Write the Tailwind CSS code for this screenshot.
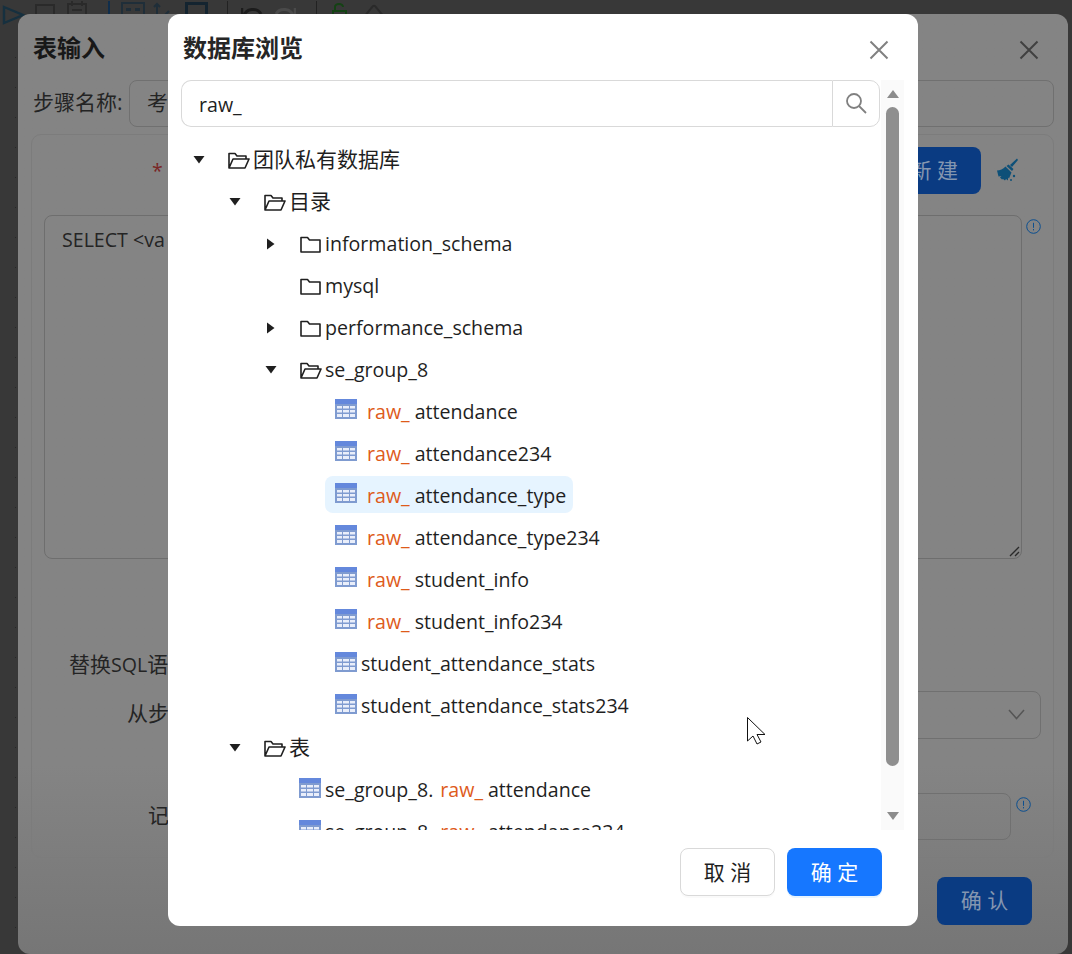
<!DOCTYPE html>
<html lang="zh">
<head>
<meta charset="utf-8">
<script src="https://cdn.jsdelivr.net/npm/@tailwindcss/browser@4"></script>
</head>
<body class="overflow-hidden">
<div class="relative w-[1072px] h-[954px] overflow-hidden bg-[#383838] text-[19.6px] leading-[28px] text-[#1f1f1f] font-['Open_Sans','Noto_Sans_CJK_SC',sans-serif]">

  <!-- dimmed toolbar -->
  <div class="flex items-start h-[26px] overflow-visible pl-[2px]">
    <svg class="w-[23px] h-[20px] mt-[5px] shrink-0" viewBox="0 0 23 20" fill="none" stroke="#16303f" stroke-width="2.400"><path d="M2 2 L21 10 L2 18 Z"/></svg>
    <div class="ml-[10px] w-[20px] h-[18px] mt-[4px] border-2 border-[#2a2a2a] shrink-0"></div>
    <svg class="ml-[12px] w-[20px] h-[20px] mt-[1px] shrink-0" viewBox="0 0 20 20" fill="none" stroke="#2a2a2a" stroke-width="2"><rect x="1" y="3" width="18" height="16"/><path d="M5 0v5M15 0v5M5 9h10"/></svg>
    <div class="ml-[21px] w-[2px] h-[14px] mt-[1px] bg-[#102e4c] shrink-0"></div>
    <div class="ml-[11px] w-[24px] h-[14px] mt-[2px] border-2 border-[#1f2e39] shrink-0 flex items-center justify-center"><div class="w-[14px] h-[3px] border-x-[5px] border-[#1f2e39]"></div></div>
    <svg class="ml-[7px] w-[18px] h-[14px] mt-[2px] shrink-0" viewBox="0 0 18 14" fill="none" stroke="#1f2e39" stroke-width="2"><path d="M5 14V2M2 5l3-3 3 3M12 14l5-5"/></svg>
    <div class="ml-[15px] w-[23px] h-[18px] mt-[2px] border-[3px] border-[#142430] shrink-0"></div>
    <div class="ml-[19px] w-[1px] h-[14px] mt-[1px] bg-[#222] shrink-0"></div>
    <svg class="ml-[13px] w-[22px] h-[14px] mt-[4px] shrink-0" viewBox="0 0 22 14" fill="none" stroke="#1c1c1c" stroke-width="3"><path d="M3 12a9 8 0 0 1 17-2"/><path d="M1 4v8h7" stroke-width="2.500"/></svg>
    <svg class="ml-[11px] w-[22px] h-[14px] mt-[4px] shrink-0" viewBox="0 0 22 14" fill="none" stroke="#4a4a4a" stroke-width="3"><path d="M19 12a9 8 0 0 0-17-2"/><path d="M21 4v8h-7" stroke-width="2.500"/></svg>
    <div class="ml-[20px] w-[1px] h-[14px] mt-[1px] bg-[#222] shrink-0"></div>
    <svg class="ml-[14px] w-[17px] h-[14px] mt-[3px] shrink-0" viewBox="0 0 17 14" fill="none" stroke="#144214" stroke-width="2"><path d="M2 14V8h13v6M4 8V4a4 3 0 0 1 8 0"/></svg>
    <svg class="ml-[13px] w-[25px] h-[14px] mt-[3px] shrink-0" viewBox="0 0 25 14" fill="none" stroke="#2a2a2a" stroke-width="2"><path d="M3 14 12 3a2 2 0 0 1 2 0l9 11"/></svg>
  </div>
  <div class="absolute left-[15px] top-[57px] w-[1px] h-[897px] bg-[linear-gradient(#262626_0_1px,transparent_1px)] bg-[length:1px_30px]"></div>

  <!-- underlying dimmed dialog -->
  <div class="absolute left-[18px] top-[14px] w-[1050px] h-[940px] rounded-[12px] bg-gradient-to-b from-[#848484] from-80% to-[#767676] pl-[13px] pr-[14px] text-[#242424]">
    <div class="h-[66px] pt-[20px] pl-[2px] text-[24px] leading-[28px] font-bold text-[#181818]">表输入</div>
    <div class="flex items-center h-[47px]">
      <span class="w-[98px] shrink-0 pl-[2px] -mt-[3px] text-[21px] whitespace-nowrap">步骤名称:</span>
      <div class="flex-1 h-[47px] rounded-[8px] border border-[#707070] pl-[17px] leading-[43px] text-[21px]">考</div>
    </div>
    <div class="relative mt-[7px] h-[724px] rounded-[10px] border border-[#7c7c7c]">
      <span class="absolute left-[120px] top-[22px] text-[#7a2626]">*</span>
      <div class="absolute right-[72px] top-[12px] w-[90px] h-[47px] rounded-[8px] bg-[#0a3b82] text-[#8496b0] text-right pr-[23px] leading-[47px] text-[21px]">新 建</div>
      <svg class="absolute right-[35px] top-[23px] w-[22px] h-[24px]" viewBox="0 0 22 24" fill="#0e5078"><path d="M21 0.500 22 2l-6 7-2-2zM12.500 6.500l5 4.500-1.500 2-5.500-5zM9.500 8.500l6 6-2.500 6-1-1 0 3-2-1.500-1 1.500-2-1.500-1 .5-2-2 1.500-1.500-3 .5L1 12.500c3 0 6-1.500 8.500-4z"/><circle cx="18" cy="18" r="1.200"/><circle cx="15" cy="22" r="1"/></svg>
      <div class="absolute left-[12px] top-[80px] w-[978px] h-[344px] rounded-[8px] border border-[#6e6e6e] pl-[17px] pt-[10px]">SELECT &lt;va
        <svg class="absolute right-[1px] bottom-[1px] w-[12px] h-[12px]" viewBox="0 0 12 12" stroke="#2a2a2a" stroke-width="1.300"><path d="M11 2 2 11M11 7 7 11"/></svg>
      </div>
      <svg class="absolute left-[994px] top-[84px] w-[15px] h-[15px]" viewBox="0 0 15 15" fill="none" stroke="#0c4f90"><circle cx="7.500" cy="7.500" r="6.800"/><path d="M7.500 3.800v5M7.500 10v1.400"/></svg>
      <span class="absolute left-[37px] top-[515px] text-[21px] whitespace-nowrap">替换<span class="text-[19.6px]">SQL</span>语</span>
      <span class="absolute left-[95px] top-[564px] text-[21px]">从步</span>
      <div class="absolute right-[12px] top-[556px] w-[500px] h-[48px] rounded-[8px] border border-[#707070]">
        <svg class="absolute right-[15px] top-[17px] w-[17px] h-[11px]" viewBox="0 0 17 11" fill="none" stroke="#555" stroke-width="1.500"><path d="M1 1l7.500 8.500L16 1"/></svg>
      </div>
      <span class="absolute left-[116px] top-[666px] text-[21px]">记</span>
      <div class="absolute right-[42px] top-[658px] w-[400px] h-[47px] rounded-[8px] border border-[#707070]"></div>
      <svg class="absolute left-[984px] top-[662px] w-[15px] h-[15px]" viewBox="0 0 15 15" fill="none" stroke="#0c4f90"><circle cx="7.500" cy="7.500" r="6.800"/><path d="M7.500 3.800v5M7.500 10v1.400"/></svg>
    </div>
    <div class="flex justify-end mt-[19px] mr-[22px]">
      <div class="w-[95px] h-[48px] rounded-[8px] bg-[#0a3b82] text-[#8496b0] text-center leading-[46px] text-[21px]">确 认</div>
    </div>
    <svg class="absolute right-[29px] top-[26px] w-[20px] h-[20px]" viewBox="0 0 20 20" stroke="#404040" stroke-width="2"><path d="M1.500 1.500l17 17M18.500 1.500l-17 17"/></svg>
  </div>

  <!-- foreground dialog -->
  <div class="absolute left-[168px] top-[14px] w-[750px] h-[912px] rounded-[12px] bg-white flex flex-col pl-[13px] text-[#1f1f1f]">
    <div class="h-[66px] pt-[20px] pl-[2px] text-[24px] leading-[28px] font-bold text-[#262626]">数据库浏览</div>
    <svg class="absolute right-[29px] top-[26px] w-[20px] h-[20px]" viewBox="0 0 20 20" stroke="#808080" stroke-width="2"><path d="M1.500 1.500l17 17M18.500 1.500l-17 17"/></svg>

    <div class="flex h-[750px] shrink-0">
      <div class="w-[699px] flex flex-col">
        <div class="flex h-[47px] shrink-0">
          <div class="flex-1 rounded-l-[10px] border border-r-0 border-[#d9d9d9] pl-[17px] leading-[48px]">raw_</div>
          <div class="w-[48px] rounded-r-[10px] border border-[#d9d9d9] flex items-center justify-center">
            <svg class="w-[22px] h-[22px] -mt-[1px]" viewBox="0 0 22 22" fill="none" stroke="#808080" stroke-width="1.800"><circle cx="9" cy="9" r="7"/><path d="M14 14l7 7"/></svg>
          </div>
        </div>
        <div class="mt-[12px] h-[691px] overflow-hidden">
          <div class="flex items-center h-[42px] pl-[11px]"><svg class="w-[14px] h-[8px] shrink-0" viewBox="0 0 14 8" fill="#1f1f1f"><path d="M1.500 0h11L7 7.500z"/></svg><svg class="ml-[22px] w-[22px] h-[17px] shrink-0" viewBox="0 0 22 17" fill="none" stroke="#1f1f1f" stroke-width="1.600"><path d="M1 16V1.500h6l2 2.500h9v3M1 16h16l4-9H5z" stroke-linejoin="round"/></svg><span class="ml-[3px] -mt-[3px] text-[21px]">团队私有数据库</span></div>
          <div class="flex items-center h-[42px] pl-[47px]"><svg class="w-[14px] h-[8px] shrink-0" viewBox="0 0 14 8" fill="#1f1f1f"><path d="M1.500 0h11L7 7.500z"/></svg><svg class="ml-[22px] w-[22px] h-[17px] shrink-0" viewBox="0 0 22 17" fill="none" stroke="#1f1f1f" stroke-width="1.600"><path d="M1 16V1.500h6l2 2.500h9v3M1 16h16l4-9H5z" stroke-linejoin="round"/></svg><span class="ml-[3px] -mt-[3px] text-[21px]">目录</span></div>
          <div class="flex items-center h-[42px] pl-[86px]"><svg class="w-[8px] h-[14px] shrink-0" viewBox="0 0 8 14" fill="#1f1f1f"><path d="M0 1.500v11L7.500 7z"/></svg><svg class="ml-[25px] w-[21px] h-[17px] shrink-0" viewBox="0 0 21 17" fill="none" stroke="#1f1f1f" stroke-width="1.600"><path d="M1 16V1.500h6.500l2 2.500H20v12z" stroke-linejoin="round"/></svg><span class="ml-[4px]">information_schema</span></div>
          <div class="flex items-center h-[42px] pl-[119px]"><svg class="w-[21px] h-[17px] shrink-0" viewBox="0 0 21 17" fill="none" stroke="#1f1f1f" stroke-width="1.600"><path d="M1 16V1.500h6.500l2 2.500H20v12z" stroke-linejoin="round"/></svg><span class="ml-[4px]">mysql</span></div>
          <div class="flex items-center h-[42px] pl-[86px]"><svg class="w-[8px] h-[14px] shrink-0" viewBox="0 0 8 14" fill="#1f1f1f"><path d="M0 1.500v11L7.500 7z"/></svg><svg class="ml-[25px] w-[21px] h-[17px] shrink-0" viewBox="0 0 21 17" fill="none" stroke="#1f1f1f" stroke-width="1.600"><path d="M1 16V1.500h6.500l2 2.500H20v12z" stroke-linejoin="round"/></svg><span class="ml-[4px]">performance_schema</span></div>
          <div class="flex items-center h-[42px] pl-[83px]"><svg class="w-[14px] h-[8px] shrink-0" viewBox="0 0 14 8" fill="#1f1f1f"><path d="M1.500 0h11L7 7.500z"/></svg><svg class="ml-[22px] w-[22px] h-[17px] shrink-0" viewBox="0 0 22 17" fill="none" stroke="#1f1f1f" stroke-width="1.600"><path d="M1 16V1.500h6l2 2.500h9v3M1 16h16l4-9H5z" stroke-linejoin="round"/></svg><span class="ml-[3px]">se_group_8</span></div>

          <div class="flex items-center h-[42px] pl-[154px]"><svg class="w-[22px] h-[20px] shrink-0 -mt-[6px]" viewBox="0 0 22 20"><rect width="22" height="20" fill="#7f9bd0"/><rect width="22" height="5" fill="#6488dc"/><path d="M2 7h5v2.500H2zM8 7h6v2.500H8zM15 7h5v2.500h-5zM2 11h5v2.500H2zM8 11h6v2.500H8zM15 11h5v2.500h-5zM2 15h5v3H2zM8 15h6v3H8zM15 15h5v3h-5z" fill="#e9eefa"/></svg><span class="ml-[10px] text-[#de5b1b]">raw_</span><span class="ml-[5px]">attendance</span></div>
          <div class="flex items-center h-[42px] pl-[154px]"><svg class="w-[22px] h-[20px] shrink-0 -mt-[6px]" viewBox="0 0 22 20"><rect width="22" height="20" fill="#7f9bd0"/><rect width="22" height="5" fill="#6488dc"/><path d="M2 7h5v2.500H2zM8 7h6v2.500H8zM15 7h5v2.500h-5zM2 11h5v2.500H2zM8 11h6v2.500H8zM15 11h5v2.500h-5zM2 15h5v3H2zM8 15h6v3H8zM15 15h5v3h-5z" fill="#e9eefa"/></svg><span class="ml-[10px] text-[#de5b1b]">raw_</span><span class="ml-[5px]">attendance234</span></div>
          <div class="relative flex items-center h-[42px] pl-[154px]"><div class="absolute left-[144px] top-[1px] w-[248px] h-[37px] rounded-[8px] bg-[#e6f4ff]"></div><svg class="relative w-[22px] h-[20px] shrink-0 -mt-[6px]" viewBox="0 0 22 20"><rect width="22" height="20" fill="#7f9bd0"/><rect width="22" height="5" fill="#6488dc"/><path d="M2 7h5v2.500H2zM8 7h6v2.500H8zM15 7h5v2.500h-5zM2 11h5v2.500H2zM8 11h6v2.500H8zM15 11h5v2.500h-5zM2 15h5v3H2zM8 15h6v3H8zM15 15h5v3h-5z" fill="#e9eefa"/></svg><span class="relative ml-[10px] text-[#de5b1b]">raw_</span><span class="relative ml-[5px]">attendance_type</span></div>
          <div class="flex items-center h-[42px] pl-[154px]"><svg class="w-[22px] h-[20px] shrink-0 -mt-[6px]" viewBox="0 0 22 20"><rect width="22" height="20" fill="#7f9bd0"/><rect width="22" height="5" fill="#6488dc"/><path d="M2 7h5v2.500H2zM8 7h6v2.500H8zM15 7h5v2.500h-5zM2 11h5v2.500H2zM8 11h6v2.500H8zM15 11h5v2.500h-5zM2 15h5v3H2zM8 15h6v3H8zM15 15h5v3h-5z" fill="#e9eefa"/></svg><span class="ml-[10px] text-[#de5b1b]">raw_</span><span class="ml-[5px]">attendance_type234</span></div>
          <div class="flex items-center h-[42px] pl-[154px]"><svg class="w-[22px] h-[20px] shrink-0 -mt-[6px]" viewBox="0 0 22 20"><rect width="22" height="20" fill="#7f9bd0"/><rect width="22" height="5" fill="#6488dc"/><path d="M2 7h5v2.500H2zM8 7h6v2.500H8zM15 7h5v2.500h-5zM2 11h5v2.500H2zM8 11h6v2.500H8zM15 11h5v2.500h-5zM2 15h5v3H2zM8 15h6v3H8zM15 15h5v3h-5z" fill="#e9eefa"/></svg><span class="ml-[10px] text-[#de5b1b]">raw_</span><span class="ml-[5px]">student_info</span></div>
          <div class="flex items-center h-[42px] pl-[154px]"><svg class="w-[22px] h-[20px] shrink-0 -mt-[6px]" viewBox="0 0 22 20"><rect width="22" height="20" fill="#7f9bd0"/><rect width="22" height="5" fill="#6488dc"/><path d="M2 7h5v2.500H2zM8 7h6v2.500H8zM15 7h5v2.500h-5zM2 11h5v2.500H2zM8 11h6v2.500H8zM15 11h5v2.500h-5zM2 15h5v3H2zM8 15h6v3H8zM15 15h5v3h-5z" fill="#e9eefa"/></svg><span class="ml-[10px] text-[#de5b1b]">raw_</span><span class="ml-[5px]">student_info234</span></div>
          <div class="flex items-center h-[42px] pl-[154px]"><svg class="w-[22px] h-[20px] shrink-0 -mt-[4px]" viewBox="0 0 22 20"><rect width="22" height="20" fill="#7f9bd0"/><rect width="22" height="5" fill="#6488dc"/><path d="M2 7h5v2.500H2zM8 7h6v2.500H8zM15 7h5v2.500h-5zM2 11h5v2.500H2zM8 11h6v2.500H8zM15 11h5v2.500h-5zM2 15h5v3H2zM8 15h6v3H8zM15 15h5v3h-5z" fill="#e9eefa"/></svg><span class="ml-[4px]">student_attendance_stats</span></div>
          <div class="flex items-center h-[42px] pl-[154px]"><svg class="w-[22px] h-[20px] shrink-0 -mt-[4px]" viewBox="0 0 22 20"><rect width="22" height="20" fill="#7f9bd0"/><rect width="22" height="5" fill="#6488dc"/><path d="M2 7h5v2.500H2zM8 7h6v2.500H8zM15 7h5v2.500h-5zM2 11h5v2.500H2zM8 11h6v2.500H8zM15 11h5v2.500h-5zM2 15h5v3H2zM8 15h6v3H8zM15 15h5v3h-5z" fill="#e9eefa"/></svg><span class="ml-[4px]">student_attendance_stats234</span></div>

          <div class="flex items-center h-[42px] pl-[47px]"><svg class="w-[14px] h-[8px] shrink-0" viewBox="0 0 14 8" fill="#1f1f1f"><path d="M1.500 0h11L7 7.500z"/></svg><svg class="ml-[22px] w-[22px] h-[17px] shrink-0" viewBox="0 0 22 17" fill="none" stroke="#1f1f1f" stroke-width="1.600"><path d="M1 16V1.500h6l2 2.500h9v3M1 16h16l4-9H5z" stroke-linejoin="round"/></svg><span class="ml-[3px] -mt-[3px] text-[21px]">表</span></div>
          <div class="flex items-center h-[42px] pl-[118px]"><svg class="w-[22px] h-[20px] shrink-0 -mt-[4px]" viewBox="0 0 22 20"><rect width="22" height="20" fill="#7f9bd0"/><rect width="22" height="5" fill="#6488dc"/><path d="M2 7h5v2.500H2zM8 7h6v2.500H8zM15 7h5v2.500h-5zM2 11h5v2.500H2zM8 11h6v2.500H8zM15 11h5v2.500h-5zM2 15h5v3H2zM8 15h6v3H8zM15 15h5v3h-5z" fill="#e9eefa"/></svg><span class="ml-[4px]">se_group_8.</span><span class="ml-[7px] text-[#de5b1b]">raw_</span><span class="ml-[5px]">attendance</span></div>
          <div class="flex items-center h-[42px] pl-[118px]"><svg class="w-[22px] h-[20px] shrink-0 -mt-[4px]" viewBox="0 0 22 20"><rect width="22" height="20" fill="#7f9bd0"/><rect width="22" height="5" fill="#6488dc"/><path d="M2 7h5v2.500H2zM8 7h6v2.500H8zM15 7h5v2.500h-5zM2 11h5v2.500H2zM8 11h6v2.500H8zM15 11h5v2.500h-5zM2 15h5v3H2zM8 15h6v3H8zM15 15h5v3h-5z" fill="#e9eefa"/></svg><span class="ml-[4px]">se_group_8.</span><span class="ml-[7px] text-[#de5b1b]">raw_</span><span class="ml-[5px]">attendance234</span></div>
        </div>
      </div>
      <!-- scrollbar -->
      <div class="ml-[1px] w-[23px] bg-[#fafafa] flex flex-col items-center">
        <svg class="mt-[10px] w-[12px] h-[8px] shrink-0" viewBox="0 0 12 8" fill="#8c8c8c"><path d="M6 0l6 8H0z"/></svg>
        <div class="mt-[9px] w-[13px] h-[659px] rounded-[7px] bg-[#8f8f8f] shrink-0"></div>
        <svg class="mt-[46px] w-[12px] h-[8px] shrink-0" viewBox="0 0 12 8" fill="#8c8c8c"><path d="M6 8L12 0H0z"/></svg>
      </div>
    </div>

    <div class="flex justify-end gap-[12px] mt-[18px] pr-[36px] text-[21px]">
      <div class="w-[95px] h-[48px] rounded-[8px] border border-[#d9d9d9] bg-white text-center leading-[46px] shadow-[0_2px_0_rgba(0,0,0,0.02)]">取 消</div>
      <div class="w-[95px] h-[48px] rounded-[8px] bg-[#1677ff] text-white text-center leading-[48px] shadow-[0_2px_0_rgba(5,145,255,0.1)]">确 定</div>
    </div>
  </div>

  <!-- mouse pointer -->
  <svg class="absolute left-[747px] top-[717px] w-[20px] h-[28px]" viewBox="0 0 20 28" fill="white" stroke="#111" stroke-width="1"><path d="M0.500 0.500V24l5.500-5 4 8 4-2-4-7.500h8z"/></svg>
</div>
</body>
</html>
